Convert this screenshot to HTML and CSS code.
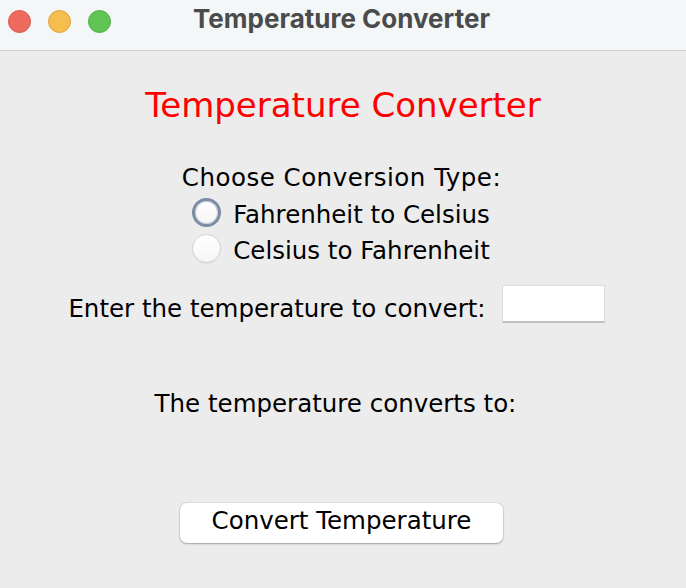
FILE: index.html
```html
<!DOCTYPE html>
<html lang="en">
<head>
<meta charset="utf-8">
<title>Temperature Converter</title>
<link rel="stylesheet" href="styles.css">
</head>
<body>
<div class="window">
  <header class="titlebar">
    <div class="lights">
      <span class="light light-close"></span>
      <span class="light light-min"></span>
      <span class="light light-max"></span>
    </div>
    <div class="title">Temperature Converter</div>
    <div class="spacer"></div>
  </header>
  <main class="content">
    <h1 class="heading">Temperature Converter</h1>
    <div class="label choose">Choose Conversion Type:</div>
    <div class="radios">
      <label class="radio-row">
        <span class="radio radio-focus"></span>
        <span class="label">Fahrenheit to Celsius</span>
      </label>
      <label class="radio-row">
        <span class="radio"></span>
        <span class="label">Celsius to Fahrenheit</span>
      </label>
    </div>
    <div class="input-row">
      <span class="label input-label">Enter the temperature to convert:</span>
      <span class="field"></span>
    </div>
    <div class="label result">The temperature converts to:</div>
    <button class="btn" type="button">Convert Temperature</button>
  </main>
</div>
</body>
</html>
```
FILE: styles.css
```css
html, body {
  margin: 0;
  padding: 0;
}
body {
  background: #ececec;
  font-family: "DejaVu Sans", "Liberation Sans", sans-serif;
  color: #000;
}
.window {
  width: 686px;
  height: 588px;
  overflow: hidden;
  background: #ececec;
}
.titlebar {
  height: 50px;
  background: #f3f7f7;
  border-bottom: 1px solid #cdcdcd;
  display: grid;
  grid-template-columns: 1fr auto 1fr;
  align-items: start;
}
.lights {
  display: flex;
  gap: 17px;
  padding: 10px 0 0 8px;
}
.light {
  width: 23px;
  height: 23px;
  border-radius: 50%;
  box-sizing: border-box;
}
.light-close { background: #ee6a5e; border: 1px solid #d85549; }
.light-min { background: #f6be4f; border: 1px solid #dea33a; }
.light-max { background: #61c555; border: 1px solid #4fab42; }
.title {
  font-family: Inter, "Liberation Sans", sans-serif;
  font-weight: 700;
  font-size: 26px;
  line-height: 30px;
  padding-top: 4px;
  padding-right: 3px;
  color: #4b4b4b;
  white-space: nowrap;
}
.content {
  display: flex;
  flex-direction: column;
  align-items: center;
}
.heading {
  margin: 34px 0 0;
  font-size: 34px;
  line-height: 40px;
  font-weight: normal;
  color: #ff0000;
}
.label {
  font-size: 24.5px;
  line-height: 30px;
  white-space: nowrap;
}
.choose {
  margin-top: 38px;
  letter-spacing: 0.5px;
  padding-right: 3px;
}
.radios {
  margin-top: 4px;
  display: flex;
  flex-direction: column;
  align-items: flex-start;
  padding-right: 4px;
}
.radio-row {
  height: 36px;
  display: flex;
  align-items: center;
  gap: 12px;
}
.radio {
  width: 29px;
  height: 29px;
  margin-bottom: 6px;
  border-radius: 50%;
  box-sizing: border-box;
  background: linear-gradient(#ffffff, #f6f6f6);
  border: 1px solid #d2d2d2;
  box-shadow: 0 1px 1px rgba(0, 0, 0, 0.06);
}
.radio-focus {
  border: 3px solid #7b8ca4;
  box-shadow: inset 0 0 0 1px #c9d1db;
}
.input-row {
  margin-top: 15.5px;
  display: flex;
  align-items: flex-start;
  gap: 16px;
  padding-right: 13px;
}
.input-label {
  margin-top: 9px;
}
.field {
  width: 103px;
  height: 38px;
  box-sizing: border-box;
  background: #fff;
  border: 1px solid #dcdcdc;
  border-bottom: 2px solid #c2c2c2;
}
.result {
  margin-top: 65px;
  padding-right: 15px;
}
.btn {
  margin-top: 84px;
  margin-right: 3px;
  width: 323px;
  height: 40px;
  box-sizing: border-box;
  padding: 3px 0 7px;
  font-family: "DejaVu Sans", "Liberation Sans", sans-serif;
  font-size: 24.5px;
  line-height: 30px;
  color: #000;
  background: #fff;
  border: none;
  border-radius: 7px;
  box-shadow: 0 0 0 1px rgba(0, 0, 0, 0.06), 0 1px 2px rgba(0, 0, 0, 0.28);
}
```
